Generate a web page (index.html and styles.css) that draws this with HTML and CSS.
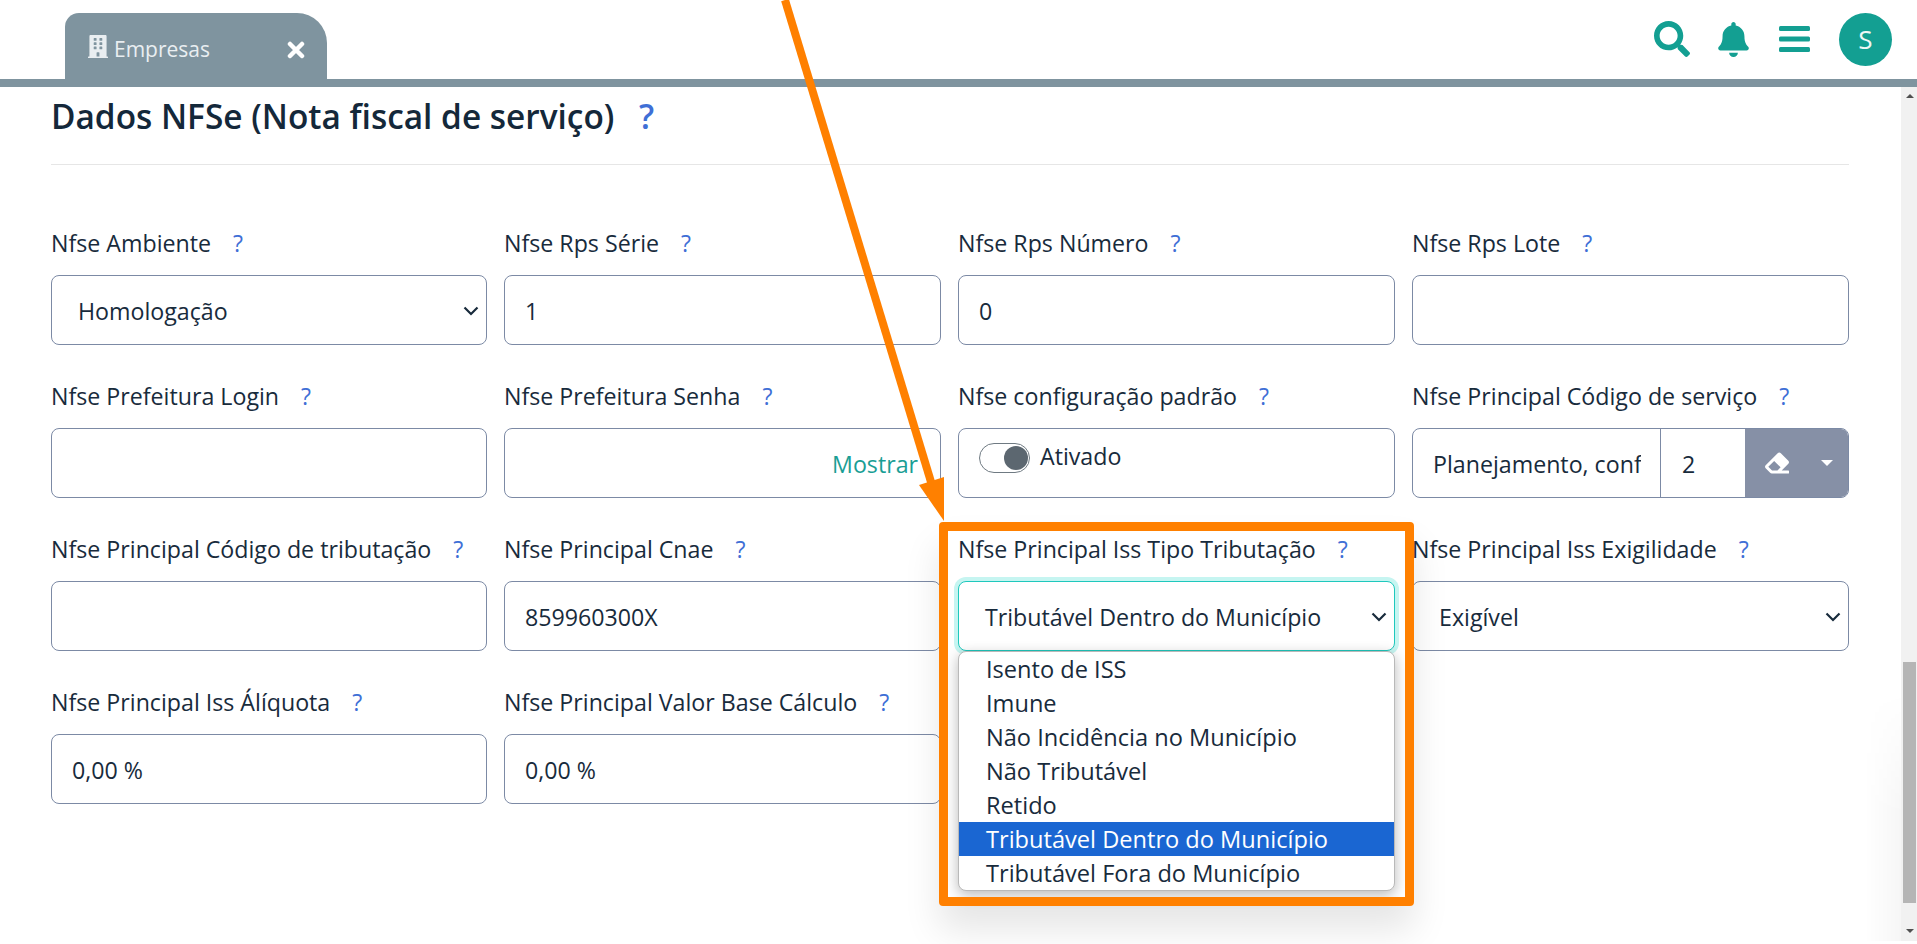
FILE: index.html
```html
<!DOCTYPE html>
<html lang="pt-BR">
<head>
    <meta charset="UTF-8">
    <meta name="viewport" content="width=device-width, initial-scale=1.0">
    <title>Empresas</title>
    <link rel="stylesheet" href="styles.css">
</head>
<body>
    <!-- Top bar -->
    <header class="topbar">
        <div class="tab">
            <svg class="tab-icon" viewBox="0 0 448 512"><path d="M436 480h-20V24c0-13.255-10.745-24-24-24H56C42.745 0 32 10.745 32 24v456H12c-6.627 0-12 5.373-12 12v20h448v-20c0-6.627-5.373-12-12-12zM128 76c0-6.627 5.373-12 12-12h40c6.627 0 12 5.373 12 12v40c0 6.627-5.373 12-12 12h-40c-6.627 0-12-5.373-12-12V76zm0 96c0-6.627 5.373-12 12-12h40c6.627 0 12 5.373 12 12v40c0 6.627-5.373 12-12 12h-40c-6.627 0-12-5.373-12-12v-40zm52 148h-40c-6.627 0-12-5.373-12-12v-40c0-6.627 5.373-12 12-12h40c6.627 0 12 5.373 12 12v40c0 6.627-5.373 12-12 12zm76 160h-64v-84c0-6.627 5.373-12 12-12h40c6.627 0 12 5.373 12 12v84zm64-172c0 6.627-5.373 12-12 12h-40c-6.627 0-12-5.373-12-12v-40c0-6.627 5.373-12 12-12h40c6.627 0 12 5.373 12 12v40zm0-96c0 6.627-5.373 12-12 12h-40c-6.627 0-12-5.373-12-12v-40c0-6.627 5.373-12 12-12h40c6.627 0 12 5.373 12 12v40zm0-96c0 6.627-5.373 12-12 12h-40c-6.627 0-12-5.373-12-12V76c0-6.627 5.373-12 12-12h40c6.627 0 12 5.373 12 12v40z"/></svg>
            <span class="tab-name">Empresas</span>
            <svg class="tab-close" viewBox="0 0 18 18"><path d="M3 3l12 12M15 3L3 15"/></svg>
        </div>
        <div class="actions">
            <svg class="icon-search" viewBox="0 0 512 512"><path d="M505 442.7L405.3 343c-4.5-4.5-10.6-7-17-7H372c27.6-35.3 44-79.7 44-128C416 93.1 322.9 0 208 0S0 93.1 0 208s93.1 208 208 208c48.3 0 92.7-16.4 128-44v16.3c0 6.4 2.5 12.5 7 17l99.7 99.7c9.4 9.4 24.6 9.4 33.9 0l28.3-28.3c9.4-9.4 9.4-24.6.1-34zM208 336c-70.7 0-128-57.2-128-128 0-70.7 57.2-128 128-128 70.7 0 128 57.2 128 128 0 70.7-57.2 128-128 128z"/></svg>
            <svg class="icon-bell" viewBox="0 0 448 512"><path d="M224 512c35.32 0 63.97-28.65 63.97-64H160.03c0 35.35 28.65 64 63.97 64zm215.39-149.71c-19.32-20.76-55.47-51.99-55.47-154.29 0-77.7-54.48-139.9-127.94-155.16V32c0-17.67-14.32-32-31.98-32s-31.98 14.33-31.98 32v20.84C118.56 68.1 64.08 130.3 64.08 208c0 102.3-36.15 133.53-55.47 154.29-6 6.45-8.66 14.16-8.61 21.71.11 16.4 12.98 32 32.1 32h383.8c19.12 0 32-15.6 32.1-32 .05-7.55-2.61-15.27-8.61-21.71z"/></svg>
            <svg class="icon-bars" viewBox="0 0 31 26"><rect x="0" y="0" width="31" height="5" rx="1.5"/><rect x="0" y="10.5" width="31" height="5" rx="1.5"/><rect x="0" y="21" width="31" height="5" rx="1.5"/></svg>
            <div class="avatar">S</div>
        </div>
    </header>
    <div class="tabline"></div>

    <div class="page">
        <main class="content">
            <h2 class="section-title">Dados NFSe (Nota fiscal de serviço) <span class="help">?</span></h2>
            <hr class="section-rule">

            <div class="fields">
                <div class="field">
                    <label>Nfse Ambiente <span class="help">?</span></label>
                    <div class="control select">Homologação
                        <svg class="chevron" viewBox="0 0 16 10"><path d="M1.5 1.5L8 8l6.5-6.5"/></svg>
                    </div>
                </div>
                <div class="field">
                    <label>Nfse Rps Série <span class="help">?</span></label>
                    <div class="control">1</div>
                </div>
                <div class="field">
                    <label>Nfse Rps Número <span class="help">?</span></label>
                    <div class="control">0</div>
                </div>
                <div class="field">
                    <label>Nfse Rps Lote <span class="help">?</span></label>
                    <div class="control"></div>
                </div>

                <div class="field">
                    <label>Nfse Prefeitura Login <span class="help">?</span></label>
                    <div class="control"></div>
                </div>
                <div class="field">
                    <label>Nfse Prefeitura Senha <span class="help">?</span></label>
                    <div class="control password"><span class="show-link">Mostrar</span></div>
                </div>
                <div class="field">
                    <label>Nfse configuração padrão <span class="help">?</span></label>
                    <div class="control switch-box">
                        <span class="switch"><span class="knob"></span></span>
                        <span>Ativado</span>
                    </div>
                </div>
                <div class="field">
                    <label>Nfse Principal Código de serviço <span class="help">?</span></label>
                    <div class="control group">
                        <span class="group-name"><span class="group-clip">Planejamento, conf</span></span>
                        <span class="group-code">2</span>
                        <span class="group-btn">
                            <svg class="icon-eraser" viewBox="0 0 512 512"><path d="M497.941 273.941c18.745-18.745 18.745-49.137 0-67.882l-160-160c-18.745-18.745-49.137-18.745-67.882 0l-256 256c-18.745 18.745-18.745 49.137 0 67.882l96 96A48.004 48.004 0 0 0 144 480h356c6.627 0 12-5.373 12-12v-40c0-6.627-5.373-12-12-12H355.883l142.058-142.059zm-302.627-62.627l137.373 137.373L265.373 416H150.628l-80-80 124.686-124.686z"/></svg>
                            <span class="caret"></span>
                        </span>
                    </div>
                </div>

                <div class="field">
                    <label>Nfse Principal Código de tributação <span class="help">?</span></label>
                    <div class="control"></div>
                </div>
                <div class="field">
                    <label>Nfse Principal Cnae <span class="help">?</span></label>
                    <div class="control">859960300X</div>
                </div>
                <div class="field field-open">
                    <label>Nfse Principal Iss Tipo Tributação <span class="help">?</span></label>
                    <div class="control select focused">Tributável Dentro do Município
                        <svg class="chevron" viewBox="0 0 16 10"><path d="M1.5 1.5L8 8l6.5-6.5"/></svg>
                    </div>
                    <ul class="dropdown">
                        <li>Isento de ISS</li>
                        <li>Imune</li>
                        <li>Não Incidência no Município</li>
                        <li>Não Tributável</li>
                        <li>Retido</li>
                        <li class="selected">Tributável Dentro do Município</li>
                        <li>Tributável Fora do Município</li>
                    </ul>
                </div>
                <div class="field">
                    <label>Nfse Principal Iss Exigilidade <span class="help">?</span></label>
                    <div class="control select">Exigível
                        <svg class="chevron" viewBox="0 0 16 10"><path d="M1.5 1.5L8 8l6.5-6.5"/></svg>
                    </div>
                </div>

                <div class="field">
                    <label>Nfse Principal Iss Álíquota <span class="help">?</span></label>
                    <div class="control">0,00 %</div>
                </div>
                <div class="field">
                    <label>Nfse Principal Valor Base Cálculo <span class="help">?</span></label>
                    <div class="control">0,00 %</div>
                </div>
                <div class="field">
                    <label>&nbsp;</label>
                    <div class="control"></div>
                </div>
            </div>
        </main>

        <!-- Scrollbar -->
        <aside class="scrollbar">
            <span class="arrow-up"></span>
            <span class="thumb"></span>
            <span class="arrow-down"></span>
        </aside>
    </div>

    <!-- Annotation drawn on top of the screenshot -->
    <svg class="pointer" viewBox="0 0 1917 944">
        <path class="pointer-line" d="M785 0L938 505"/>
        <path class="pointer-head" d="M944 521L919 485L944 477z"/>
    </svg>
    <div class="highlight"></div>
</body>
</html>
```

FILE: styles.css
```css
html, body {
    height: 100%;
}

body {
    margin: 0;
    overflow: hidden;
    background: #fff;
    font-family: 'Open Sans', 'Noto Sans', sans-serif;
    font-size: 23.2px;
    color: #182b3c;
    position: relative;
}

/* Top bar */
.topbar {
    height: 79px;
    display: flex;
    justify-content: space-between;
    align-items: flex-end;
}

.tab {
    width: 262px;
    height: 66px;
    margin-left: 65px;
    box-sizing: border-box;
    padding: 0 22px 0 23px;
    display: flex;
    align-items: center;
    background: #7f949f;
    border-radius: 14px 30px 0 0;
    color: #e9eef1;
    font-size: 21px;
}

.tab-icon {
    width: 20px;
    height: 23px;
    fill: #e9eef1;
    margin-right: 6px;
    margin-top: 1px;
}

.tab-name {
    margin-top: 5px;
}

.tab-close {
    width: 18px;
    height: 18px;
    margin-left: auto;
    margin-top: 8px;
    fill: none;
    stroke: #fff;
    stroke-width: 4.5;
    stroke-linecap: round;
}

.actions {
    height: 79px;
    display: flex;
    align-items: center;
    padding-right: 25px;
    box-sizing: border-box;
}

.actions svg {
    fill: #139f92;
}

.icon-search {
    width: 36px;
    height: 36px;
    margin-top: -1px;
    margin-right: 28px;
}

.icon-bell {
    width: 31px;
    height: 35px;
    margin-top: -1px;
    margin-right: 30px;
}

.icon-bars {
    width: 31px;
    height: 26px;
    margin-top: -1px;
    margin-right: 29px;
}

.avatar {
    width: 53px;
    height: 53px;
    margin-top: -1px;
    border-radius: 50%;
    background: #139f92;
    color: #eef7f6;
    font-size: 26px;
    display: flex;
    align-items: center;
    justify-content: center;
}

.tabline {
    height: 8px;
    background: #7f949f;
}

/* Content */
.page {
    display: flex;
    height: 854px;
    position: relative;
}

/* faint shade along the scrollbar */
.page::after {
    content: "";
    position: absolute;
    right: 16px;
    bottom: 0;
    width: 36px;
    height: 250px;
    background: linear-gradient(to right, rgba(0, 0, 0, 0), rgba(0, 0, 0, .035));
    -webkit-mask-image: linear-gradient(to bottom, transparent, #000 50%);
    mask-image: linear-gradient(to bottom, transparent, #000 50%);
}

.content {
    flex: 1;
    padding: 0 52px 0 51px;
}

.section-title {
    margin: 0;
    padding-top: 7px;
    font-size: 33.4px;
    line-height: 44px;
    font-weight: 600;
    color: #14283a;
}

.section-title .help {
    margin-left: 16px;
    font-weight: 600;
}

.section-rule {
    margin: 26px 0 0;
    border: 0;
    border-top: 1px solid #e6e6e6;
}

.fields {
    display: grid;
    grid-template-columns: 436px 437px 437px 437px;
    column-gap: 17px;
    row-gap: 37px;
    margin-top: 64px;
}

.field {
    position: relative;
}

.field label {
    display: block;
    height: 30px;
    line-height: 28px;
    margin-bottom: 16px;
    white-space: nowrap;
}

.help {
    color: #3f6fd6;
    margin-left: 16px;
}

.control {
    height: 70px;
    box-sizing: border-box;
    border: 1px solid #7c8aa5;
    border-radius: 8px;
    padding: 1px 20px 0;
    display: flex;
    align-items: center;
    background: #fff;
    position: relative;
}

.select {
    padding-left: 26px;
}

.chevron {
    position: absolute;
    right: 7px;
    top: 30px;
    width: 16px;
    height: 10px;
    fill: none;
    stroke: #182b3c;
    stroke-width: 2.2;
}

.focused {
    border-color: #1fc8bd;
    box-shadow: 0 0 0 4px #c6f5f1;
}

.password {
    justify-content: flex-end;
    padding-right: 22px;
}

.show-link {
    color: #1a9e95;
}

.switch-box {
    align-items: flex-start;
    padding: 11px 20px 0 20px;
    gap: 10px;
}

.switch {
    width: 51px;
    height: 30px;
    box-sizing: border-box;
    margin-top: 3px;
    border: 1px solid #6f7a82;
    border-radius: 15px;
    display: flex;
    align-items: center;
    justify-content: flex-end;
    padding-right: 1px;
    flex: none;
}

.knob {
    width: 24px;
    height: 24px;
    border-radius: 50%;
    background: #5c6770;
}

.group {
    padding: 0;
    overflow: hidden;
}

.group-name {
    width: 248px;
    box-sizing: border-box;
    padding: 1px 19px 0 20px;
    height: 100%;
    display: flex;
    align-items: center;
    border-right: 1px solid #7c8aa5;
    flex: none;
}

.group-clip {
    display: block;
    overflow: hidden;
    white-space: nowrap;
}

.group-code {
    flex: 1;
    padding: 1px 0 0 21px;
}

.group-btn {
    width: 103px;
    height: 100%;
    background: #8690a6;
    display: flex;
    align-items: center;
    padding-left: 20px;
    box-sizing: border-box;
    gap: 32px;
}

.icon-eraser {
    width: 24px;
    height: 24px;
    fill: #fff;
}

.caret {
    border-left: 6px solid transparent;
    border-right: 6px solid transparent;
    border-top: 6px solid #fff;
}

/* Open select list */
.dropdown {
    position: absolute;
    left: 0;
    right: 0;
    top: 116px;
    z-index: 5;
    margin: 0;
    padding: 0;
    list-style: none;
    background: #fff;
    border: 1px solid #b9b9b9;
    border-radius: 8px;
    overflow: hidden;
    font-size: 23.6px;
    box-shadow: 0 4px 14px rgba(0, 0, 0, .28);
}

.dropdown li {
    height: 34px;
    line-height: 34px;
    padding-left: 27px;
    white-space: nowrap;
}

.dropdown .selected {
    background: #1a66d2;
    color: #fff;
}

/* Scrollbar */
.scrollbar {
    width: 16px;
    height: 854px;
    background: #f1f1f1;
    position: relative;
}

.thumb {
    position: absolute;
    left: 2px;
    right: 1px;
    top: 575px;
    height: 241px;
    background: #b5b5b5;
}

.arrow-up, .arrow-down {
    position: absolute;
    left: 5px;
    border-left: 4px solid transparent;
    border-right: 4px solid transparent;
}

.arrow-up {
    top: 7px;
    border-bottom: 4px solid #505050;
}

.arrow-down {
    bottom: 8px;
    border-top: 4px solid #505050;
}

/* Orange annotation */
.pointer {
    position: absolute;
    left: 0;
    top: 0;
    width: 1917px;
    height: 944px;
    z-index: 10;
    pointer-events: none;
}

.pointer-line {
    fill: none;
    stroke: #ff8000;
    stroke-width: 8;
}

.pointer-head {
    fill: #ff8000;
}

.highlight {
    position: absolute;
    left: 939px;
    top: 522px;
    width: 475px;
    height: 384px;
    box-sizing: border-box;
    border: 9px solid #ff8000;
    border-radius: 4px;
    z-index: 10;
    box-shadow: 0 24px 36px rgba(0, 0, 0, .10);
}
```
